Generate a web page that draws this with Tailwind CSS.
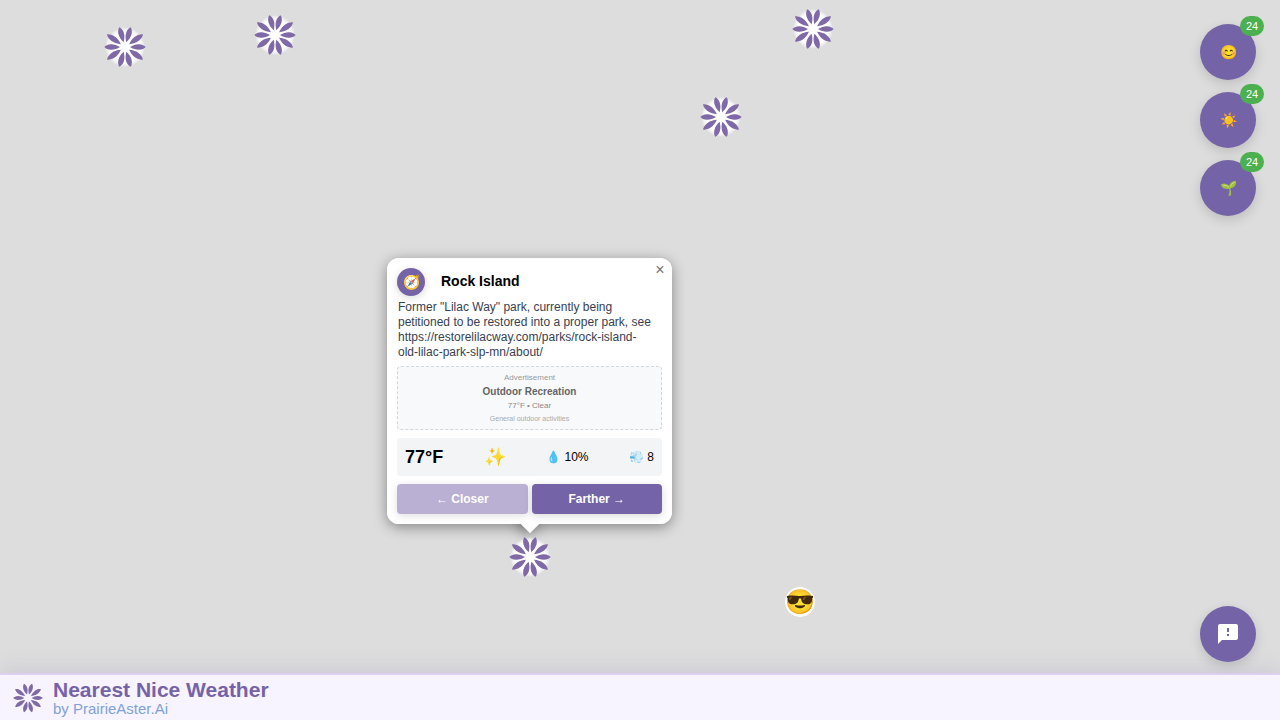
<!DOCTYPE html>
<html lang="en">
<head>
<meta charset="utf-8">
<meta name="viewport" content="width=device-width, initial-scale=1">
<title>Nearest Nice Weather</title>
<script src="https://cdn.jsdelivr.net/npm/@tailwindcss/browser@4"></script>
</head>
<body class="flex h-screen flex-col overflow-hidden bg-[#ddd] font-['Liberation_Sans',Arial,sans-serif]">
<svg class="absolute size-0" aria-hidden="true">
  <defs>
    <radialGradient id="glow"><stop offset="0.76" stop-color="#fff"/><stop offset="0.88" stop-color="#fff" stop-opacity="0.6"/><stop offset="1" stop-color="#fff" stop-opacity="0"/></radialGradient>
    <path id="petal" d="M5 0C8 -1.8 11 -2.9 14 -2.8C17 -2.7 19.5 -1.4 20.6 0C19.5 1.4 17 2.7 14 2.8C11 2.9 8 1.8 5 0Z"/>
    <path id="long-petal" d="M5 0C8 -1.8 11 -2.8 14.5 -2.8C17.5 -2.7 20.5 -1.4 22 0C20.5 1.4 17.5 2.7 14.5 2.8C11 2.8 8 1.8 5 0Z"/>
    <symbol id="aster" viewBox="-21 -21 42 42">
      <g fill="#7f69a7">
        <use href="#petal"/><use href="#long-petal" transform="rotate(35)"/><use href="#petal" transform="rotate(74)"/><use href="#petal" transform="rotate(106)"/><use href="#long-petal" transform="rotate(145)"/><use href="#petal" transform="rotate(180)"/><use href="#long-petal" transform="rotate(215)"/><use href="#petal" transform="rotate(254)"/><use href="#petal" transform="rotate(286)"/><use href="#long-petal" transform="rotate(325)"/>
      </g>
    </symbol>
    <symbol id="marker" viewBox="-21 -21 42 42">
      <circle r="20" fill="url(#glow)"/>
      <use href="#aster" x="-21" y="-21" width="42" height="42"/>
    </symbol>
  </defs>
</svg>

<main class="relative min-h-0 flex-1">
  <button class="absolute left-[104px] top-[26px] size-[42px]" aria-label="Park"><svg class="size-full"><use href="#marker"/></svg></button>
  <button class="absolute left-[254px] top-[14px] size-[42px]" aria-label="Park"><svg class="size-full"><use href="#marker"/></svg></button>
  <button class="absolute left-[792px] top-[8px] size-[42px]" aria-label="Park"><svg class="size-full"><use href="#marker"/></svg></button>
  <button class="absolute left-[700px] top-[96px] size-[42px]" aria-label="Park"><svg class="size-full"><use href="#marker"/></svg></button>
  <div class="absolute left-[785px] top-[587px] flex size-[30px] items-center justify-center rounded-full bg-white text-[24px] leading-none">😎</div>

  <section class="absolute left-[387px] top-[258px] w-[285px] rounded-xl bg-white p-[10px] shadow-[0_3px_14px_rgba(0,0,0,0.4)]">
    <div class="absolute -bottom-1.5 left-1/2 size-4 -translate-x-1/2 rotate-45 bg-white shadow-[0_3px_14px_rgba(0,0,0,0.4)]"></div>
    <div class="absolute inset-0 rounded-xl bg-white"></div>
    <div class="relative">
      <header class="flex items-center gap-4">
        <span class="flex size-7 items-center justify-center rounded-full bg-[#7563a8] text-sm leading-none shadow-[0_2px_8px_rgba(0,0,0,0.15)]">🧭</span>
        <h2 class="pb-0.5 text-sm font-bold leading-5 text-black">Rock Island</h2>
      </header>
      <p class="mt-1 pl-px pr-2 text-xs leading-[15px] text-[#374151]">Former "Lilac Way" park, currently being petitioned to be restored into a proper park, see https://restorelilacway.com/parks/rock-island-old-lilac-park-slp-mn/about/</p>
      <div class="mt-1.5 flex h-16 flex-col items-center justify-center rounded border border-dashed border-[#d3d6da] bg-[#f8f9fb] pt-0.5 text-center">
        <span class="text-[8px] leading-[12px] text-[#999]">Advertisement</span>
        <strong class="text-[10px] leading-[16px] text-[#666]">Outdoor Recreation</strong>
        <span class="text-[8px] leading-[12px] text-[#888]">77°F • Clear</span>
        <span class="text-[7px] leading-[14px] text-[#aaa]">General outdoor activities</span>
      </div>
      <div class="mt-2 flex h-[38px] items-center justify-between rounded bg-[#f3f4f6] px-2 text-xs text-black">
        <strong class="text-lg">77°F</strong>
        <span class="text-lg">✨</span>
        <span>💧 10%</span>
        <span>💨 8</span>
      </div>
      <div class="mt-2 grid grid-cols-2 gap-1 text-xs font-bold text-white">
        <button class="h-[30px] rounded bg-[#bab0d3] shadow-[0_2px_8px_rgba(0,0,0,0.12)]" disabled>← Closer</button>
        <button class="h-[30px] rounded bg-[#7563a8] shadow-[0_2px_8px_rgba(0,0,0,0.15)]">Farther →</button>
      </div>
    </div>
    <button class="absolute right-0 top-0 size-6 text-base leading-6 text-[#757575]" aria-label="Close popup">×</button>
  </section>
  <button class="absolute left-[509px] top-[536px] size-[42px]" aria-label="Rock Island"><svg class="size-full"><use href="#marker"/></svg></button>

  <nav class="absolute right-6 top-6 flex flex-col gap-3 text-[14px] leading-none" aria-label="Filters">
    <button class="relative size-14 rounded-full bg-[#7563a8] shadow-[0_4px_12px_rgba(0,0,0,0.15)]" aria-label="Temperature, 24">😊<span class="absolute -right-2 -top-2 flex h-5 w-6 items-center justify-center rounded-[10px] bg-[#4caf50] text-[11px] text-white">24</span></button>
    <button class="relative size-14 rounded-full bg-[#7563a8] shadow-[0_4px_12px_rgba(0,0,0,0.15)]" aria-label="Sky, 24">☀️<span class="absolute -right-2 -top-2 flex h-5 w-6 items-center justify-center rounded-[10px] bg-[#4caf50] text-[11px] text-white">24</span></button>
    <button class="relative size-14 rounded-full bg-[#7563a8] shadow-[0_4px_12px_rgba(0,0,0,0.15)]" aria-label="Season, 24">🌱<span class="absolute -right-2 -top-2 flex h-5 w-6 items-center justify-center rounded-[10px] bg-[#4caf50] text-[11px] text-white">24</span></button>
  </nav>
  <button class="absolute bottom-[11px] right-6 z-10 flex size-14 items-center justify-center rounded-full bg-[#7563a8] shadow-[0_4px_12px_rgba(0,0,0,0.15)]" aria-label="Send feedback">
    <svg class="size-6" viewBox="0 0 24 24" fill="#fff"><path d="M20 2H4c-1.1 0-2 .9-2 2v18l4-4h14c1.1 0 2-.9 2-2V4c0-1.1-.9-2-2-2m-7 12h-2v-2h2zm0-4h-2V6h2z"/></svg>
  </button>
</main>

<footer class="flex h-[47px] shrink-0 items-center gap-[10px] border-t-2 border-[#dcd0ee] bg-[#f7f3ff] px-[13px] shadow-[0_-4px_20px_rgba(117,99,168,0.15)]">
  <svg class="size-[30px]" aria-hidden="true"><use href="#aster"/></svg>
  <div>
    <h1 class="text-[21px] font-bold leading-[22px] text-[#7563a8]">Nearest Nice Weather</h1>
    <p class="text-[15px] leading-4 text-[#7fa3d4]">by PrairieAster.Ai</p>
  </div>
</footer>
</body>
</html>
